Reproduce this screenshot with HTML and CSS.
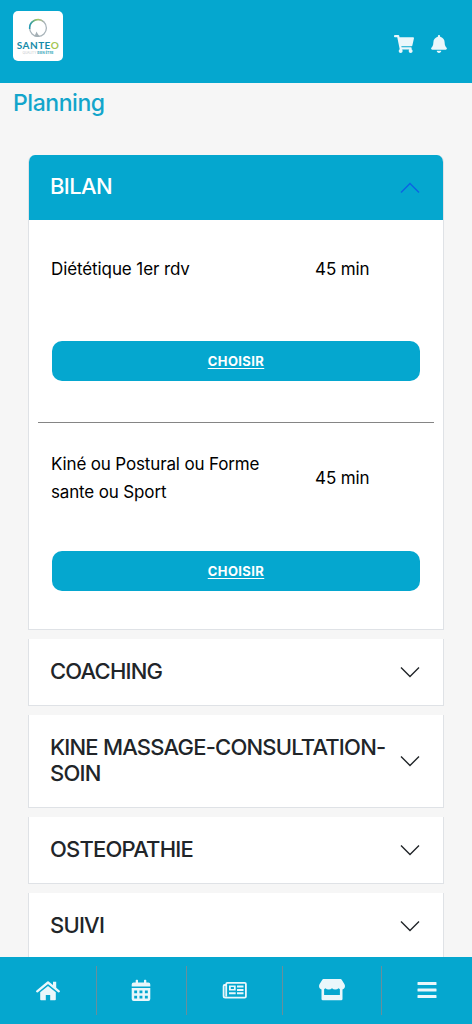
FILE: index.html
```html
<!DOCTYPE html>
<html lang="fr">
<head>
<meta charset="utf-8">
<title>Planning</title>
<link rel="stylesheet" href="styles.css">
</head>
<body>
<div class="app">
  <header class="topbar">
    <div class="logo">
      <svg class="logo-mark" viewBox="0 0 20 20">
        <defs><linearGradient id="arc" x1="0" y1="0" x2="1" y2="0"><stop offset="0" stop-color="#2199b2"/><stop offset=".55" stop-color="#a4c95b"/><stop offset="1" stop-color="#a8b2b7"/></linearGradient></defs>
        <circle cx="10" cy="10" r="8.400" fill="none" stroke="#a9b4ba" stroke-width="1.300"/>
        <path d="M1.700 11A8.400 8.400 0 0 1 15.900 4" fill="none" stroke="url(#arc)" stroke-width="1.500"/>
        <path d="M8.600 13.500l1.200 2.500 2.200 2.800-3 .2-2.500-.8z" fill="#a4afb5"/>
      </svg>
      <div class="logo-name">SANTE<span class="logo-o">O</span></div>
      <div class="logo-tag">QUALITY <span class="logo-tag-em">BIEN ÊTRE</span></div>
    </div>
    <div class="actions">
      <svg class="cart" viewBox="0 0 576 512"><path d="M528.12 301.319l47.273-208C578.806 78.301 567.391 64 551.99 64H159.208l-9.166-44.81C147.758 8.021 137.93 0 126.529 0H24C10.745 0 0 10.745 0 24v16c0 13.255 10.745 24 24 24h69.883l70.248 343.435C147.325 417.1 136 435.222 136 456c0 30.928 25.072 56 56 56s56-25.072 56-56c0-15.674-6.447-29.835-16.824-40h209.647C430.447 426.165 424 440.326 424 456c0 30.928 25.072 56 56 56s56-25.072 56-56c0-22.172-12.888-41.332-31.579-50.405l5.517-24.276c3.413-15.018-8.002-29.319-23.403-29.319H218.117l-6.545-32h293.145c11.206 0 20.92-7.754 23.403-18.681z"/></svg>
      <svg class="bell" viewBox="0 0 448 512"><path d="M224 512c35.32 0 63.97-28.65 63.97-64H160.03c0 35.35 28.65 64 63.97 64zm215.39-149.71c-19.32-20.76-55.47-51.99-55.47-154.29 0-77.7-54.48-139.9-127.94-155.16V32c0-17.67-14.32-32-31.98-32s-31.98 14.33-31.98 32v20.84C118.56 68.1 64.08 130.3 64.08 208c0 102.3-36.15 133.53-55.47 154.29-6 6.45-8.66 14.16-8.61 21.71.11 16.4 12.98 32 32.1 32h383.8c19.12 0 32-15.6 32.1-32 .05-7.55-2.61-15.27-8.61-21.71z"/></svg>
    </div>
  </header>

  <main class="content">
    <h1 class="title">Planning</h1>
    <div class="accordion">
      <section class="card card-open">
        <div class="card-head card-head-open"><h2 class="card-title">BILAN</h2>
          <svg class="chevron chevron-up" viewBox="0 0 22 22"><path d="M2 15.5L11 6.5L20 15.5"/></svg></div>
        <div class="service">
          <div class="info"><p class="name">Diététique 1er rdv</p><p class="duration">45 min</p></div>
          <a class="choose">CHOISIR</a>
        </div>
        <div class="service service-next">
          <div class="info info-tall"><p class="name name-long">Kiné ou Postural ou Forme<br>sante ou Sport</p><p class="duration">45 min</p></div>
          <a class="choose">CHOISIR</a>
        </div>
      </section>
      <section class="card"><div class="card-head"><h2 class="card-title">COACHING</h2>
        <svg class="chevron" viewBox="0 0 22 22"><path d="M2 6.5L11 15.5L20 6.5"/></svg></div></section>
      <section class="card"><div class="card-head card-head-tall"><h2 class="card-title">KINE MASSAGE-CONSULTATION-<br>SOIN</h2>
        <svg class="chevron" viewBox="0 0 22 22"><path d="M2 6.5L11 15.5L20 6.5"/></svg></div></section>
      <section class="card"><div class="card-head"><h2 class="card-title">OSTEOPATHIE</h2>
        <svg class="chevron" viewBox="0 0 22 22"><path d="M2 6.5L11 15.5L20 6.5"/></svg></div></section>
      <section class="card"><div class="card-head"><h2 class="card-title">SUIVI</h2>
        <svg class="chevron" viewBox="0 0 22 22"><path d="M2 6.5L11 15.5L20 6.5"/></svg></div></section>
    </div>
  </main>

  <nav class="tabs">
    <a class="tab"><svg class="tab-icon" viewBox="0 0 26 24"><path d="M2.200 12.300L13 3.500l10.800 8.800" fill="none" stroke="#eaf7fb" stroke-width="2.300" stroke-linecap="round" stroke-linejoin="round"/><path d="M18 2.700h3.200v7.200L18 7.200zM13 6.900l7.800 6.400v7.200q0 .8-.8.800h-4.800v-5.200h-4.400v5.200H6q-.8 0-.8-.8v-7.200z"/></svg></a>
    <a class="tab"><svg class="tab-icon tab-icon-left" viewBox="0 0 26 24"><path fill-rule="evenodd" d="M3.700 7.500V5.500q0-2 2-2h2V1.500q0-.7.7-.7h.9q.7 0 .7.7v2h6v-2q0-.7.7-.7h.9q.7 0 .7.7v2h2q2 0 2 2v2zM3.700 9h18.600v11q0 2-2 2H5.700q-2 0-2-2zM6.200 11.500v2.700h2.900v-2.700zM11.500 11.500v2.700h2.900v-2.700zM16.900 11.500v2.700h2.900v-2.700zM6.200 16.700v2.700h2.900v-2.700zM11.500 16.700v2.700h2.900v-2.700zM16.900 16.700v2.700h2.900v-2.700z"/></svg></a>
    <a class="tab"><svg class="tab-icon" viewBox="0 0 26 24"><path d="M4.200 17.500V5q0-1.200 1.200-1.200h17.300Q23.900 3.800 23.900 5v12.500q0 1.200-1.200 1.200H3.200q-1.600 0-1.600-1.600V7q0-1 1-1h1.600" fill="none" stroke="#eaf7fb" stroke-width="1.800"/><path fill-rule="evenodd" d="M7 6.500h6.700v5H7zM8.800 8.100v1.800h3.100V8.100zM15 6.500h6.500v1.900H15zM15 10h6.500v1.900H15zM7 13.300h6.700v1.900H7zM15 13.300h6.500v1.900H15z"/></svg></a>
    <a class="tab"><svg class="tab-icon tab-icon-up" viewBox="0 0 26 24"><path d="M4.400 1.100h17.200q.7 0 1.100.6l2.800 4.600c1.300 2.500-.2 5.200-2.900 5.200q-1.800 0-3-1.300-1.300 1.300-3.300 1.300T13 10.200q-1.300 1.300-3.300 1.300t-3.300-1.300q-1.200 1.300-3 1.300c-2.700 0-4.200-2.700-2.900-5.200l2.800-4.600q.4-.6 1.100-.6z"/><path d="M2.500 11h2.600v6h15.800v-6h2.600v9.900q0 1.400-1.400 1.400H3.900q-1.400 0-1.400-1.400z"/></svg></a>
    <a class="tab"><svg class="tab-icon tab-icon-up" viewBox="0 0 26 24"><path d="M4 4h18q.5 0 .5.500V6.500q0 .5-.5.500H4q-.5 0-.5-.5V4.500Q3.500 4 4 4zM4 10.500h18q.5 0 .5.500v2q0 .5-.5.500H4q-.5 0-.5-.5v-2q0-.5.500-.5zM4 17h18q.5 0 .5.500v2q0 .5-.5.500H4q-.5 0-.5-.5v-2q0-.5.500-.5z"/></svg></a>
  </nav>
</div>
</body>
</html>
```
FILE: styles.css
```css
* { box-sizing: border-box; }
body { margin: 0; background: #f6f6f6; font-family: Inter, "Liberation Sans", sans-serif; color: #000; }
h1, h2, p { margin: 0; }
svg { display: block; flex: none; }
.app { height: 1024px; display: flex; flex-direction: column; overflow: hidden; }

.topbar { height: 82.5px; flex: none; background: #05a7cf; display: flex; justify-content: space-between; align-items: flex-start; padding: 11px 25px 0 13px; }
.logo { width: 50px; height: 50px; background: #fff; border-radius: 5px; display: flex; flex-direction: column; align-items: center; padding-top: 7px; }
.logo-mark { width: 20px; height: 20px; }
.logo-name { font-family: Lato, sans-serif; font-weight: 700; font-size: 10px; line-height: 11px; margin-top: 2px; letter-spacing: .45px; color: #168ba9; white-space: nowrap; }
.logo-o { color: #a4c653; }
.logo-tag { font-size: 3.2px; line-height: 4px; color: #c6c9cb; white-space: nowrap; }
.logo-tag-em { color: #3fa9bd; font-weight: 700; }
.actions { display: flex; gap: 17px; padding-top: 24px; fill: #eaf7fb; }
.cart { width: 20px; height: 18px; }
.bell { width: 16px; height: 18px; }

.content { flex: 1; min-height: 0; overflow: hidden; }
.title { margin: 5px 0 0 13px; font-size: 23px; line-height: 31px; font-weight: 500; letter-spacing: -.45px; color: #13a5cb; }
.accordion { margin: 36.5px 28px 0; display: flex; flex-direction: column; gap: 9px; }
.card { background: #fff; border: 1px solid #dfe2e6; border-top: 0; }
.card-open { border-radius: 7px 7px 0 0; height: 475px; overflow: hidden; }
.card-head { height: 66px; padding: 0 22px 0 21px; display: flex; align-items: center; justify-content: space-between; }
.card-head-open { height: 65px; background: #05a7cf; color: #fff; }
.card-head-open .card-title { color: #fff; }
.card-head-tall { height: 92px; }
.card-title { font-size: 22px; line-height: 26px; font-weight: 500; letter-spacing: -.8px; color: #212529; white-space: nowrap; padding-bottom: 3px; }
.card-head-open .card-title { letter-spacing: -.6px; }
.chevron { width: 22px; height: 22px; fill: none; stroke: #212529; stroke-width: 1.4; }
.chevron-up { stroke: #0c63e4; }

.service { margin: 0 9px; height: 202px; padding: 35px 14px 0; }
.service-next { border-top: 1px solid #858585; padding-top: 27px; height: 207px; }
.info { display: grid; grid-template-columns: 264px 1fr; align-items: center; height: 28px; margin-left: -1px; font-size: 17px; line-height: 28px; letter-spacing: -.1px; white-space: nowrap; }
.name-long { letter-spacing: -.15px; }
.info-tall { height: 56px; }
.choose { display: flex; align-items: center; justify-content: center; height: 39.5px; margin-top: 58px; border-radius: 10px; background: #05a7cf; color: #fff; font-size: 13px; font-weight: 700; letter-spacing: .4px; text-decoration: underline; text-underline-offset: 2px; }
.service-next .choose { margin-top: 45px; }

.tabs { height: 67px; flex: none; background: #05a7cf; padding: 9px 0; display: grid; grid-template-columns: 97px 90px 96px 99px 90px; }
.tab { height: 49px; display: flex; align-items: center; justify-content: center; border-right: 1px solid #678f9c; }
.tab:last-child { border-right: 0; }
.tab-icon { width: 26px; height: 24px; fill: #eaf7fb; }
.tab-icon-left { margin-right: 1px; }
.tab-icon-up { margin-bottom: 1px; }
```
